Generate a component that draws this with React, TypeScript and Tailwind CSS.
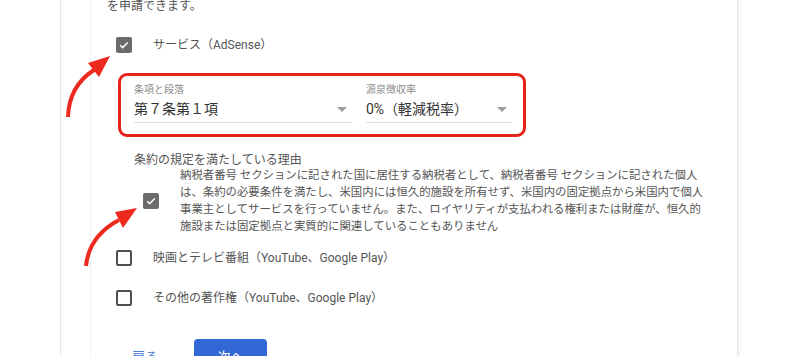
import React from "react";

const font = { fontFamily: 'Roboto, "Noto Sans CJK JP", sans-serif' };

function CheckBox({ checked }: { checked?: boolean }) {
  if (checked) {
    return (
      <span className="flex w-[16px] h-[16px] shrink-0 items-center justify-center rounded-[2px] bg-[#6b6b6b]">
        <svg width="12" height="12" viewBox="0 0 24 24" fill="none">
          <path d="M4.5 12.5l4.8 4.8L19.5 7" stroke="#fff" strokeWidth="3" />
        </svg>
      </span>
    );
  }
  return <span className="block w-[16px] h-[16px] shrink-0 rounded-[2px] border-2 border-[#505050]" />;
}

function Select({ label, value, width }: { label: string; value: string; width: string }) {
  return (
    <div className={`${width} flex flex-col`}>
      <span className="text-[10px] leading-[12px] text-[#8a8a8a]">{label}</span>
      <div className="flex items-center justify-between h-[27px] border-b border-[#dedede]">
        <span className="text-[14px] leading-[20px] text-[#333]">{value}</span>
        <svg width="10" height="5" viewBox="0 0 10 5" className="mr-[5px]">
          <path d="M0 0h10L5 5z" fill="#9e9e9e" />
        </svg>
      </div>
    </div>
  );
}

export default function App() {
  return (
    <div className="relative w-[800px] h-[356px] overflow-hidden bg-white" style={font}>
      <div className="ml-[60px] w-[678px] h-full flex border-l border-r border-[#e6e6e6] shadow-[2px_0_2px_rgba(0,0,0,0.05)]">
        <div className="w-[30px] shrink-0 border-r border-[#f1f1f1]" />
        <div className="flex flex-col pl-[16px] text-[#555]">
          <p className="shrink-0 -mt-[3px] text-[12px] leading-[18px]">を申請できます。</p>

          <div className="shrink-0 mt-[18px] flex items-center h-[24px] pl-[9px] gap-[21px]">
            <CheckBox checked />
            <span className="text-[12px]">サービス（AdSense）</span>
          </div>

          <div className="shrink-0 mt-[16px] ml-[11px] w-[408px] h-[64px] rounded-[9px] border-[3px] border-[#e6231b] flex gap-[14px] pl-[13px] pt-[8px]">
            <Select label="条項と段落" value="第７条第１項" width="w-[218px]" />
            <Select label="源泉徴収率" value="0%（軽減税率）" width="w-[146px]" />
          </div>

          <div className="shrink-0 ml-[27px] mt-[15px] flex flex-col">
            <span className="text-[12px] leading-[16px]">条約の規定を満たしている理由</span>
            <div className="-mt-[1px] flex items-center pl-[9px] gap-[21px]">
              <CheckBox checked />
              <p className="text-[11.4px] leading-[17px] whitespace-nowrap">
                納税者番号 セクションに記された国に居住する納税者として、納税者番号 セクションに記された個人
                <br />
                は、条約の必要条件を満たし、米国内には恒久的施設を所有せず、米国内の固定拠点から米国内で個人
                <br />
                事業主としてサービスを行っていません。また、ロイヤリティが支払われる権利または財産が、恒久的
                <br />
                施設または固定拠点と実質的に関連していることもありません
              </p>
            </div>
          </div>

          <div className="shrink-0 mt-[11px] flex items-center h-[24px] pl-[9px] gap-[21px]">
            <CheckBox />
            <span className="text-[12px]">映画とテレビ番組（YouTube、Google Play）</span>
          </div>

          <div className="shrink-0 mt-[16px] flex items-center h-[24px] pl-[9px] gap-[21px]">
            <CheckBox />
            <span className="text-[12px]">その他の著作権（YouTube、Google Play）</span>
          </div>

          <div className="shrink-0 mt-[29px] flex items-start gap-[20px] pl-[9px]">
            <button className="h-[36px] px-[16px] text-[13px] text-[#4a7bd6]">戻る</button>
            <button className="w-[73px] h-[36px] rounded-[4px] bg-[#3367d6] text-[13px] text-white">次へ</button>
          </div>
        </div>
      </div>

      <svg className="absolute left-0 top-0 pointer-events-none" width="800" height="356">
        <path d="M68 117 Q69 86 94 70" stroke="#ee2a1e" strokeWidth="4" fill="none" />
        <path d="M110 56 L88 63 L99 77 Z" fill="#ee2a1e" />
        <path d="M86 266 Q89 236 119 220" stroke="#ee2a1e" strokeWidth="4" fill="none" />
        <path d="M137 208 L115 212 L123 228 Z" fill="#ee2a1e" />
      </svg>
    </div>
  );
}
